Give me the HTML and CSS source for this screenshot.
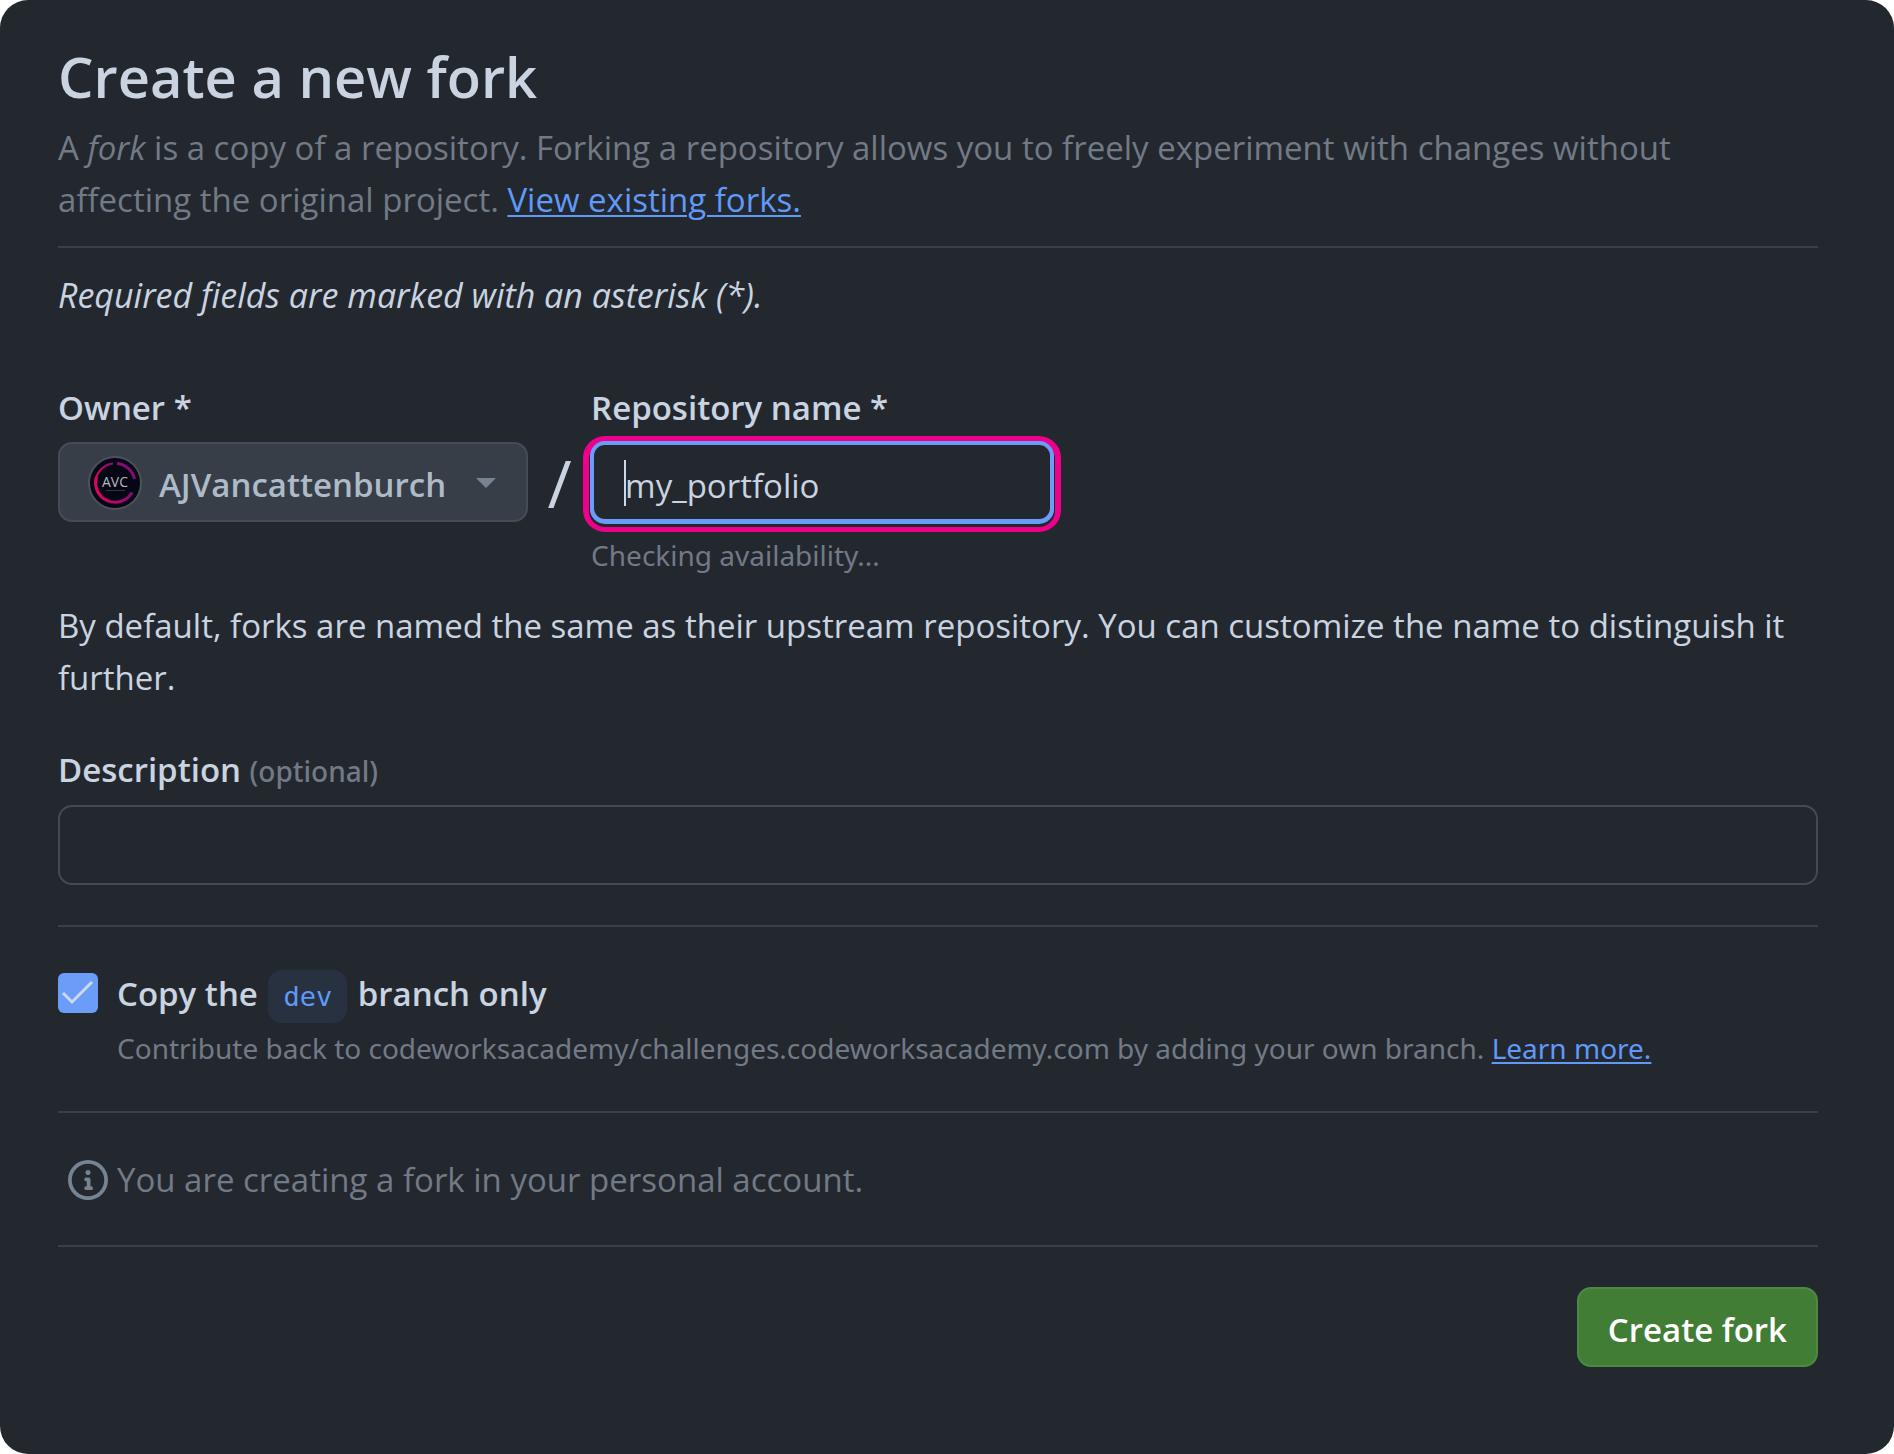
FILE: index.html
```html
<!DOCTYPE html>
<html lang="en">
<head>
<meta charset="utf-8">
<title>Create a new fork</title>
<link rel="stylesheet" href="styles.css">
</head>
<body>
<main class="card">
  <header class="intro">
    <h1 class="title">Create a new fork</h1>
    <p class="lead">A <em>fork</em> is a copy of a repository. Forking a repository allows you to freely experiment with changes without affecting the original project. <a class="link" href="#forks">View existing forks.</a></p>
  </header>

  <form>
    <p class="required">Required fields are marked with an asterisk (*).</p>

    <div class="naming">
      <label class="label" for="owner">Owner *</label>
      <label class="label repo-col" for="repo">Repository name *</label>
      <button class="owner" id="owner" type="button">
        <svg class="avatar" viewBox="0 0 54 54" aria-hidden="true">
          <defs>
            <linearGradient id="ring" x1="0" x2="1" y1="0" y2="0">
              <stop offset="0" stop-color="#e0045e"/>
              <stop offset="1" stop-color="#8a0a78"/>
            </linearGradient>
          </defs>
          <circle cx="27" cy="27" r="26" fill="#060714" stroke="#4b525c" stroke-width="2"/>
          <path d="M25 7.500A19.500 19.500 0 0 0 16 43" fill="none" stroke="url(#ring)" stroke-width="2"/>
          <path d="M8.500 21A19.500 19.500 0 0 0 44 36.500" fill="none" stroke="url(#ring)" stroke-width="3"/>
          <path d="M29 7.500A19.500 19.500 0 0 1 46.500 23" fill="none" stroke="#8a0a78" stroke-width="3"/>
          <text class="avatar-text" x="27" y="31" text-anchor="middle">AVC</text>
          <path d="M18 34.500h19" stroke="#34323f" stroke-width="1"/>
        </svg>
        <span>AJVancattenburch</span>
        <svg class="arrow" viewBox="0 0 20 12" aria-hidden="true"><path d="M0 1h20L10 11z" fill="#768390"/></svg>
      </button>
      <span class="slash">/</span>
      <div class="repo-field">
        <input class="input repo" id="repo" type="text" value="my_portfolio" aria-describedby="repo-hint">
        <span class="caret"></span>
      </div>
      <p class="hint repo-col" id="repo-hint">Checking availability...</p>
    </div>

    <p class="note">By default, forks are named the same as their upstream repository. You can customize the name to distinguish it further.</p>

    <div class="description">
      <label class="label" for="description">Description <span class="optional">(optional)</span></label>
      <input class="input" id="description" type="text">
    </div>

    <div class="branch">
      <input class="check" id="branch" type="checkbox" checked>
      <div class="branch-text">
        <label class="label" for="branch">Copy the <code class="pill">dev</code> branch only</label>
        <p class="hint">Contribute back to codeworksacademy/challenges.codeworksacademy.com by adding your own branch. <a class="link" href="#learn">Learn more.</a></p>
      </div>
    </div>

    <div class="account">
      <svg class="info" viewBox="0 0 16 16" aria-hidden="true"><path fill="#768390" d="M8 1.500a6.500 6.500 0 1 0 0 13 6.500 6.500 0 0 0 0-13ZM0 8a8 8 0 1 1 16 0A8 8 0 0 1 0 8Zm6.500-.250A.750.750 0 0 1 7.250 7h1a.750.750 0 0 1 .750.750v2.750h.250a.750.750 0 0 1 0 1.500h-2a.750.750 0 0 1 0-1.500h.250v-2h-.250a.750.750 0 0 1-.750-.750ZM8 6a1 1 0 1 1 0-2 1 1 0 0 1 0 2Z"/></svg>
      <p>You are creating a fork in your personal account.</p>
    </div>

    <div class="actions">
      <button class="submit" type="submit">Create fork</button>
    </div>
  </form>
</main>
</body>
</html>
```
FILE: styles.css
```css
* {
  box-sizing: border-box;
}

html {
  background: #fff;
}

body {
  margin: 0;
  font: 400 33px/52px "Open Sans", "Noto Sans", sans-serif;
  color: #c9d4e0;
}

h1,
p {
  margin: 0;
}

.card {
  min-height: 100vh;
  padding: 40px 76px 40px 58px;
  background: #23282f;
  border-radius: 28px;
}

.intro {
  padding-bottom: 20px;
  border-bottom: 2px solid #3a3f48;
}

.title {
  margin-bottom: 10px;
  font-size: 56px;
  line-height: 72px;
  font-weight: 600;
}

.lead {
  max-width: 1680px;
}

.lead,
.account {
  color: #717a85;
}

.link {
  color: #6099f8;
  text-decoration: underline;
  text-decoration-thickness: 2px;
  text-underline-offset: 3px;
}

.required {
  padding-top: 21px;
  font-size: 34px;
  font-style: italic;
}

.naming {
  display: grid;
  grid-template-columns: auto 63px minmax(0, 462px);
  justify-content: start;
  margin-top: 61px;
}

.label {
  font-weight: 600;
}

.repo-col {
  grid-column: 3;
}

.owner,
.submit {
  height: 80px;
  padding: 6px 29px 0;
  border-radius: 14px;
  font: inherit;
  font-weight: 600;
}

.owner {
  display: flex;
  align-items: center;
  gap: 17px;
  margin-top: 8px;
  padding: 2px 30px 0 28px;
  background: #373e47;
  border: 2px solid #444c56;
  color: #adbac7;
}

.owner span {
  padding-top: 4px;
}

.avatar {
  width: 54px;
  height: 54px;
}

.avatar-text {
  font-family: "Open Sans", sans-serif;
  font-size: 14px;
  font-weight: 400;
  fill: #b9b6c2;
}

.arrow {
  width: 20px;
  height: 12px;
  margin-left: 13px;
}

.slash {
  margin-top: 8px;
  font-size: 66px;
  line-height: 80px;
  text-align: center;
}

.repo-field {
  position: relative;
  margin-top: 8px;
}

.input {
  display: block;
  width: 100%;
  height: 80px;
  padding: 6px 31px 0;
  background: #23282f;
  border: 2px solid #444a54;
  border-radius: 14px;
  outline: 0;
  font: inherit;
  color: inherit;
}

.repo {
  border: 3px solid #6a9cf8;
  box-shadow: 0 0 0 1px #6a9cf8, 0 1px 0 1px #6a9cf8, 0 3px 0 2px #23282f, 0 2px 0 8px #ee008c;
}

.caret {
  position: absolute;
  top: 18px;
  left: 33px;
  width: 2px;
  height: 46px;
  background: #cdd9e5;
}

.hint {
  font-family: "Noto Sans", "Open Sans", sans-serif;
  font-size: 28px;
  line-height: 40px;
  color: #717a85;
}

.naming .hint {
  margin-top: 13px;
}

.note {
  margin-top: 25px;
}

.description {
  margin-top: 40px;
  padding-bottom: 40px;
  border-bottom: 2px solid #3a3f48;
}

.description .label {
  display: block;
  margin-bottom: 8px;
}

.optional {
  font-family: "Noto Sans", "Open Sans", sans-serif;
  font-size: 28px;
  font-weight: 500;
  color: #717a85;
}

.branch {
  display: flex;
  gap: 19px;
  padding: 41px 0 43px;
  border-bottom: 2px solid #3a3f48;
}

.check {
  flex: none;
  appearance: none;
  width: 40px;
  height: 40px;
  margin: 5px 0 0;
  border-radius: 6px;
  background: #6a9cf8;
}

.check:checked {
  background: #6a9cf8 url("data:image/svg+xml,%3Csvg xmlns='http://www.w3.org/2000/svg' viewBox='0 0 40 40'%3E%3Cpath d='M5 20l9 9L34 9' fill='none' stroke='%23cdd9e5' stroke-width='3'/%3E%3C/svg%3E") center / 40px 40px no-repeat;
}

.branch-text .label {
  display: block;
}

.branch-text .hint {
  margin-top: 8px;
}

.pill {
  margin: 0 2px;
  padding: 11px 15px;
  border-radius: 14px;
  background: #28313f;
  font: 400 27px "DejaVu Sans Mono", monospace;
  color: #6099f8;
}

.account {
  display: flex;
  align-items: center;
  gap: 9px;
  padding: 41px 10px 39px;
  border-bottom: 2px solid #3a3f48;
}

.info {
  flex: none;
  width: 40px;
  height: 40px;
}

.actions {
  display: flex;
  justify-content: flex-end;
  padding-top: 40px;
}

.submit {
  background: #417d35;
  border: 2px solid #4c8a42;
  color: #fff;
}
```
